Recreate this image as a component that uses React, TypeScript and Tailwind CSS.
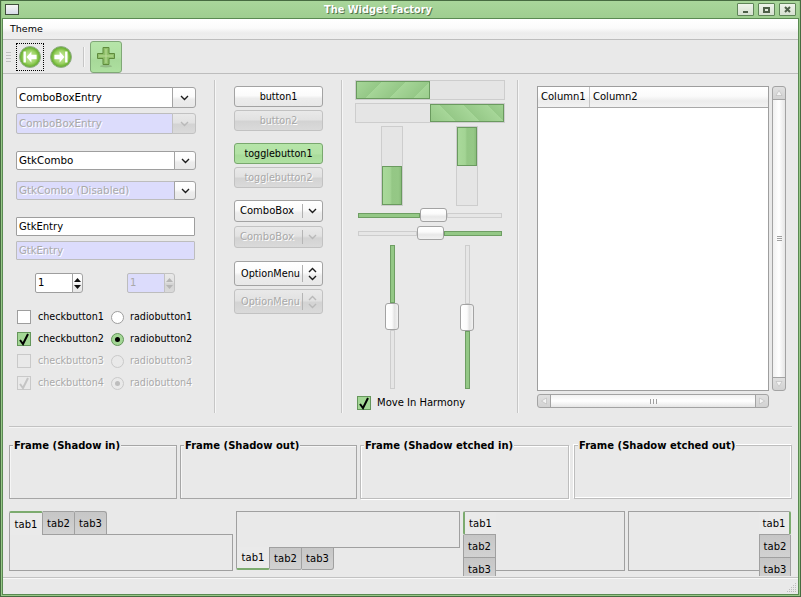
import type { ReactNode } from 'react';

const shiny = 'bg-[linear-gradient(#ffffff,#fbfbfb_45%,#ececec_60%,#e8e8e8)]';
const shinyOff = 'bg-[linear-gradient(#e9e9e9,#e2e2e2_45%,#d3d3d3_55%,#dadada)]';
const offText = 'text-[#a9a9a9] [text-shadow:1px_1px_0_#ffffff]';
const stripesV =
  'bg-[linear-gradient(90deg,#a9d99a,#a3d494_40%,#94c785_50%,#95c886_85%,#8abd7b)]';

function Chevron({ off = false, up = false }: { off?: boolean; up?: boolean }) {
  return (
    <svg width="9" height="6" viewBox="0 0 9 6" className={up ? 'rotate-180' : ''}>
      <path d="M1 1 L4.5 4.5 L8 1" fill="none" stroke={off ? '#b9b9b9' : '#1c1c1c'} strokeWidth="1.4" />
    </svg>
  );
}

function ComboEntry({ label, off = false, h, btn, activeBtn = false }: { label: string; off?: boolean; h: string; btn: string; activeBtn?: boolean }) {
  const lit = !off || activeBtn;
  return (
    <div className={`flex w-[180px] ${h}`}>
      <div className={`flex-1 flex items-center pl-[2px] text-[10.3px] rounded-l-[2px] border border-[#9e9e9e] ${off ? 'bg-[#dcdcfc] border-[#bdbdbd] ' + offText : 'bg-white text-black'}`}>
        {label}
      </div>
      <div className={`${btn} -ml-px flex items-center justify-center rounded-r-[3px] border ${lit ? 'border-[#a3a3a3] ' + shiny : 'border-[#c2c2c2] ' + shinyOff}`}>
        <Chevron off={!lit} />
      </div>
    </div>
  );
}

function Entry({ label, off = false }: { label: string; off?: boolean }) {
  return (
    <div className={`w-[179px] h-[19px] flex items-center pl-[2px] rounded-[1px] border ${off ? 'bg-[#dcdcfc] border-[#bdbdbd] ' + offText : 'bg-white border-[#9e9e9e] text-black'}`}>
      {label}
    </div>
  );
}

function Spin({ off = false }: { off?: boolean }) {
  const c = off ? '#b5b5b5' : '#111111';
  return (
    <div className="flex w-[48px] h-[20px]">
      <div className={`w-[38px] flex items-center pl-[2px] border rounded-l-[2px] ${off ? 'bg-[#dcdcfc] border-[#bdbdbd] text-[#a9a9a9]' : 'bg-white border-[#9e9e9e] text-black'}`}>1</div>
      <div className={`w-[11px] -ml-px flex flex-col items-center justify-center gap-[3px] border rounded-r-[3px] ${off ? 'border-[#c2c2c2] ' + shinyOff : 'border-[#a3a3a3] ' + shiny}`}>
        <svg width="7" height="4" viewBox="0 0 7 4"><path d="M3.5 0 L7 4 H0 Z" fill={c} /></svg>
        <svg width="7" height="4" viewBox="0 0 7 4"><path d="M0 0 H7 L3.5 4 Z" fill={c} /></svg>
      </div>
    </div>
  );
}

function Tick({ color }: { color: string }) {
  return (
    <svg width="12" height="13" viewBox="0 0 12 13">
      <path d="M2 7 L5 11 L10 1" fill="none" stroke={color} strokeWidth="2" />
    </svg>
  );
}

function Check({ on = false, off = false }: { on?: boolean; off?: boolean }) {
  let look = 'bg-white border-[#9e9e9e]';
  if (on) look = 'bg-[#a3d695] border-[#65965b]';
  if (off) look = 'bg-[#e9e9e9] border-[#c9c9c9]';
  return (
    <div className={`w-[14px] h-[14px] shrink-0 border flex items-center justify-center ${look}`}>
      {on && <Tick color={off ? '#c4c4c4' : '#000000'} />}
    </div>
  );
}

function Radio({ on = false, off = false }: { on?: boolean; off?: boolean }) {
  let look = 'bg-white border-[#9e9e9e]';
  if (on) look = 'bg-[#a3d695] border-[#65965b]';
  if (off) look = 'bg-[#e9e9e9] border-[#c9c9c9]';
  return (
    <div className={`w-[13px] h-[13px] shrink-0 rounded-full border flex items-center justify-center ${look}`}>
      {on && <div className={`w-[5px] h-[5px] rounded-full ${off ? 'bg-[#bdbdbd]' : 'bg-black'}`} />}
    </div>
  );
}

function CheckRow({ n, on = false, off = false }: { n: number; on?: boolean; off?: boolean }) {
  const text = off ? offText : 'text-black';
  return (
    <div className="flex items-center h-[22px] pl-px">
      <Check on={on} off={off} />
      <span className={`ml-[7px] w-[73px] text-[9.6px] ${text}`}>checkbutton{n}</span>
      <Radio on={on} off={off} />
      <span className={`ml-[6px] text-[9.6px] ${text}`}>radiobutton{n}</span>
    </div>
  );
}

function Btn({ label, off = false, green = false, mt = '' }: { label: string; off?: boolean; green?: boolean; mt?: string }) {
  let look = `border-[#a3a3a3] text-black ${shiny}`;
  if (off) look = `border-[#c2c2c2] ${offText} ${shinyOff}`;
  if (green) look = 'border-[#79a86e] text-black bg-[linear-gradient(#b6e5a9,#b3e2a5_50%,#a9dc9b_60%,#b0e1a2)]';
  return <div className={`w-[89px] h-[21px] flex items-center justify-center rounded-[3px] border text-[9.6px] ${look} ${mt}`}>{label}</div>;
}

function MenuBtn({ label, off = false, double = false, h, mt = '' }: { label: string; off?: boolean; double?: boolean; h: string; mt?: string }) {
  return (
    <div className={`w-[89px] flex items-center rounded-[3px] border ${h} ${mt} ${off ? `border-[#c2c2c2] ${offText} ${shinyOff}` : `border-[#a3a3a3] text-black ${shiny}`}`}>
      <span className={`flex-1 ${double ? 'pl-[6px] text-[9.7px]' : 'pl-[5px]'} whitespace-nowrap`}>{label}</span>
      <div className={`w-[20px] h-[calc(100%-6px)] shrink-0 flex flex-col items-center justify-center gap-[2px] border-l ${off ? 'border-[#b5b5b5]' : 'border-[#b0b0b0]'}`}>
        {double && <Chevron off={off} up />}
        <Chevron off={off} />
      </div>
    </div>
  );
}

function Separator() {
  return <div className="w-[2px] shrink-0 border-l border-[#c6c6c6] bg-[#f6f6f6]" />;
}

function HBar({ right = false, mt = '' }: { right?: boolean; mt?: string }) {
  return (
    <div className={`w-[150px] h-[20px] flex border border-[#cdcdcd] bg-[#e5e5e5] ${right ? 'justify-end' : ''} ${mt}`}>
      <div
        className={`w-[74px] border border-[#6a9a5f] ${
          right
            ? 'bg-[repeating-linear-gradient(45deg,#95c887_0px,#a6d698_17px)]'
            : 'bg-[repeating-linear-gradient(135deg,#a6d698_0px,#95c887_17px)]'
        }`}
      />
    </div>
  );
}

function VBar({ bottom = false }: { bottom?: boolean }) {
  return (
    <div className={`w-[22px] h-[80px] flex flex-col border border-[#cdcdcd] bg-[#e5e5e5] ${bottom ? 'justify-end' : ''}`}>
      <div className={`h-[39px] border border-[#6a9a5f] ${stripesV}`} />
    </div>
  );
}

function HThumb() {
  return <div className="w-[27px] h-[14px] shrink-0 rounded-[3px] border border-[#a3a3a3] bg-[linear-gradient(#ffffff,#fbfbfb_40%,#e8e8e8_65%,#f2f2f2)]" />;
}

function VThumb() {
  return <div className="w-[14px] h-[27px] shrink-0 rounded-[3px] border border-[#a3a3a3] bg-[linear-gradient(90deg,#ffffff,#fbfbfb_50%,#e4e4e4_70%,#f2f2f2)]" />;
}

const troughOn = 'bg-[#94c886] border border-[#6e9e63]';
const troughOff = 'bg-[#e6e6e6] border border-[#cdcdcd]';

function Frame({ label, width, look }: { label: string; width: string; look: string }) {
  return (
    <div className={`h-[54px] shrink-0 ${width} ${look}`}>
      <div className="-mt-[7px] ml-[3px] w-fit px-px bg-[#e9e9e9] font-bold text-black leading-[13px]">{label}</div>
    </div>
  );
}

function Tab({ label, active = false, className }: { label: string; active?: boolean; className: string }) {
  return (
    <div className={`flex items-center justify-center pt-px border-[#a0a0a0] text-black ${active ? 'bg-[#eaeaea]' : 'bg-[linear-gradient(#c6c6c6,#d2d2d2)]'} ${className}`}>
      {label}
    </div>
  );
}

function ToolRound({ id, mirror = false }: { id: string; mirror?: boolean }) {
  return (
    <svg width="22" height="22" viewBox="0 0 22 22" className={mirror ? '-scale-x-100' : ''}>
      <defs>
        <radialGradient id={id} cx="50%" cy="50%" r="50%">
          <stop offset="0" stopColor="#cbe9a4" />
          <stop offset="0.6" stopColor="#9fd468" />
          <stop offset="0.85" stopColor="#74b83a" />
          <stop offset="1" stopColor="#62a436" />
        </radialGradient>
      </defs>
      <circle cx="11" cy="11" r="10.5" fill={`url(#${id})`} stroke="#93b087" strokeWidth="1" />
      <rect x="4.5" y="5.5" width="2.4" height="11" fill="#ffffff" />
      <path d="M7.6 11 L12.4 5.6 V8.8 H17.6 V13.2 H12.4 V16.4 Z" fill="#ffffff" />
    </svg>
  );
}

function PlusIcon() {
  return (
    <svg width="20" height="22" viewBox="0 0 20 22">
      <ellipse cx="10" cy="20.2" rx="6" ry="1.2" fill="#93bb86" />
      <path d="M7 1.5 H13 V7.5 H18.5 V12.5 H13 V18.5 H7 V12.5 H1.5 V7.5 H7 Z" fill="#8fc06a" stroke="#5f8a3c" strokeWidth="1" />
      <path d="M10 3 V17 M3 10 H17" stroke="#bcdc98" strokeWidth="1" />
    </svg>
  );
}

function WinBtn({ children }: { children: ReactNode }) {
  return (
    <div className="w-[17px] h-[13px] flex items-center justify-center border border-[#5f8558] rounded-[1px] bg-[linear-gradient(#eef4ea,#d6e0d0)]">
      {children}
    </div>
  );
}

function ScrollArrow({ d, className = '' }: { d: string; className?: string }) {
  return (
    <div className={`w-[14px] h-[14px] shrink-0 flex items-center justify-center border border-[#a3a3a3] bg-[linear-gradient(#e0e0e0,#d2d2d2)] ${className}`}>
      <svg width="8" height="8" viewBox="0 0 8 8"><path d={d} fill="#f4f4f4" stroke="#b0b0b0" strokeWidth="0.5" /></svg>
    </div>
  );
}

export default function App() {
  return (
    <div className="w-[801px] h-[597px] overflow-hidden flex flex-col border border-[#476b41] bg-[#97c888] px-px pb-px font-['DejaVu_Sans',sans-serif] text-[10px] leading-none">
      {/* title bar */}
      <div className="h-[17px] shrink-0 flex items-center bg-[linear-gradient(#a9d69b,#9fce90)] pl-[3px] pr-[3px]">
        <div className="w-[14px] h-[11px] border border-[#3f4f3c] bg-[linear-gradient(#f6f6f6,#d8dce8)]" />
        <div className="flex-1 text-center font-bold text-[9.8px] text-white [text-shadow:1px_1px_0_#54764d]">The Widget Factory</div>
        <div className="flex gap-[4px]">
          <WinBtn><div className="w-[5px] h-[2px] mt-[4px] bg-[#4d5f48]" /></WinBtn>
          <WinBtn><div className="w-[7px] h-[6px] border-2 border-[#4d5f48]" /></WinBtn>
          <WinBtn>
            <svg width="7" height="7" viewBox="0 0 7 7"><path d="M1 1 L6 6 M6 1 L1 6" stroke="#4d5f48" strokeWidth="2" /></svg>
          </WinBtn>
        </div>
      </div>

      <div className="flex-1 min-h-0 flex flex-col border border-[#5a8a52] bg-[#e9e9e9]">
        {/* menu bar */}
        <div className="h-[21px] shrink-0 flex items-center pl-[7px] pb-px text-[9.5px] text-black border-b border-[#bdbdbd] bg-[linear-gradient(#ffffff,#fbfbfb_45%,#ececec_70%,#eeeeee)]">
          Theme
        </div>

        {/* toolbar */}
        <div className="h-[34px] shrink-0 flex items-center border-b border-[#bdbdbd]">
          <div className="ml-[3px] w-[5px] flex flex-col gap-[2px]">
            <div className="h-px bg-[#c0c0c0]" />
            <div className="h-px bg-[#c0c0c0]" />
            <div className="h-px bg-[#c0c0c0]" />
            <div className="h-px bg-[#c0c0c0]" />
          </div>
          <div className="ml-[5px] w-[28px] h-[28px] flex items-center justify-center border border-dotted border-black">
            <ToolRound id="ballFirst" />
          </div>
          <div className="ml-[6px]"><ToolRound id="ballLast" mirror /></div>
          <div className="ml-[11px] w-px h-[20px] bg-[#c6c6c6] shadow-[1px_0_0_#f6f6f6]" />
          <div className="ml-[6px] w-[32px] h-[32px] flex items-center justify-center rounded-[3px] border border-[#80a877] bg-[linear-gradient(#b6e5a9,#b0e0a2_50%,#a7d999_62%,#aee0a0)]">
            <PlusIcon />
          </div>
        </div>

        {/* widgets */}
        <div className="mt-[6px] h-[333px] shrink-0 flex">
          <div className="w-[211px] shrink-0 pl-[13px] pt-[7px]">
            <ComboEntry label="ComboBoxEntry" h="h-[21px]" btn="w-[24px]" />
            <div className="mt-[5px]"><ComboEntry label="ComboBoxEntry" off h="h-[21px]" btn="w-[24px]" /></div>
            <div className="mt-[17px]"><ComboEntry label="GtkCombo" h="h-[19px]" btn="w-[22px]" /></div>
            <div className="mt-[11px]"><ComboEntry label="GtkCombo (Disabled)" off activeBtn h="h-[19px]" btn="w-[22px]" /></div>
            <div className="mt-[17px]"><Entry label="GtkEntry" /></div>
            <div className="mt-[5px]"><Entry label="GtkEntry" off /></div>
            <div className="mt-[13px] ml-[19px] flex gap-[44px]">
              <Spin />
              <Spin off />
            </div>
            <div className="mt-[13px]">
              <CheckRow n={1} />
              <CheckRow n={2} on />
              <CheckRow n={3} off />
              <CheckRow n={4} on off />
            </div>
          </div>

          <Separator />

          <div className="w-[125px] shrink-0 pl-[18px] pt-[6px]">
            <Btn label="button1" />
            <Btn label="button2" off mt="mt-[3px]" />
            <Btn label="togglebutton1" green mt="mt-[12px]" />
            <Btn label="togglebutton2" off mt="mt-[3px]" />
            <MenuBtn label="ComboBox" h="h-[22px]" mt="mt-[12px]" />
            <MenuBtn label="ComboBox" off h="h-[22px]" mt="mt-[4px]" />
            <MenuBtn label="OptionMenu" double h="h-[25px]" mt="mt-[13px]" />
            <MenuBtn label="OptionMenu" off double h="h-[25px]" mt="mt-[3px]" />
          </div>

          <Separator />

          <div className="w-[174px] shrink-0 pl-[12px]">
            <HBar />
            <HBar right mt="mt-[3px]" />
            <div className="mt-[3px] ml-[26px] flex gap-[53px]">
              <VBar bottom />
              <VBar />
            </div>
            <div className="mt-[2px] ml-[3px] w-[144px] flex items-center">
              <div className={`w-[62px] h-[5px] ${troughOn}`} />
              <HThumb />
              <div className={`flex-1 h-[5px] ${troughOff}`} />
            </div>
            <div className="mt-[4px] ml-[3px] w-[144px] flex items-center">
              <div className={`w-[59px] h-[5px] ${troughOff}`} />
              <HThumb />
              <div className={`flex-1 h-[5px] ${troughOn}`} />
            </div>
            <div className="mt-[5px] ml-[30px] flex gap-[61px]">
              <div className="h-[144px] flex flex-col items-center">
                <div className={`w-[5px] h-[58px] ${troughOn}`} />
                <VThumb />
                <div className={`w-[5px] flex-1 ${troughOff}`} />
              </div>
              <div className="h-[144px] flex flex-col items-center">
                <div className={`w-[5px] h-[59px] ${troughOff}`} />
                <VThumb />
                <div className={`w-[5px] flex-1 ${troughOn}`} />
              </div>
            </div>
            <div className="mt-[7px] ml-[2px] flex items-center">
              <Check on />
              <span className="ml-[6px] text-black">Move In Harmony</span>
            </div>
          </div>

          <Separator />

          <div className="flex-1 pl-[18px] pt-[6px]">
            <div className="flex">
              <div className="w-[232px] h-[305px] border border-[#9e9e9e] bg-white flex flex-col">
                <div className="h-[21px] shrink-0 flex items-center border-b border-[#a8a8a8] text-black bg-[linear-gradient(#ffffff,#fbfbfb_45%,#ececec_70%,#f2f2f2)]">
                  <div className="w-[52px] h-full flex items-center pl-[3px] border-r border-[#c4c4c4]">Column1</div>
                  <div className="pl-[3px]">Column2</div>
                </div>
              </div>
              <div className="ml-[3px] w-[14px] h-[305px] flex flex-col">
                <ScrollArrow d="M4 1.5 L7 6.5 H1 Z" className="rounded-t-[3px]" />
                <div className="flex-1 -my-px flex flex-col items-center justify-center gap-px border border-[#a3a3a3] bg-[linear-gradient(90deg,#f0f0f0,#ffffff_50%,#e6e6e6)]">
                  <div className="w-[5px] h-px bg-[#a0a0a0]" />
                  <div className="w-[5px] h-px bg-[#a0a0a0]" />
                  <div className="w-[5px] h-px bg-[#a0a0a0]" />
                </div>
                <ScrollArrow d="M1 1.5 H7 L4 6.5 Z" className="rounded-b-[3px]" />
              </div>
            </div>
            <div className="mt-[3px] w-[232px] h-[14px] flex">
              <ScrollArrow d="M1.5 4 L6.5 1 V7 Z" className="rounded-l-[3px]" />
              <div className="flex-1 -mx-px flex items-center justify-center gap-[2px] border border-[#a3a3a3] bg-[linear-gradient(#f2f2f2,#ffffff_50%,#e6e6e6)]">
                <div className="w-px h-[5px] bg-[#a0a0a0]" />
                <div className="w-px h-[5px] bg-[#a0a0a0]" />
                <div className="w-px h-[5px] bg-[#a0a0a0]" />
              </div>
              <ScrollArrow d="M1.5 1 L6.5 4 L1.5 7 Z" className="rounded-r-[3px]" />
            </div>
          </div>
        </div>

        <div className="mt-[13px] ml-[6px] w-[783px] h-[2px] shrink-0 border-t border-[#c2c2c2] bg-[#f4f4f4]" />

        {/* frames */}
        <div className="mt-[17px] ml-[6px] h-[54px] shrink-0 flex">
          <Frame label="Frame (Shadow in)" width="w-[168px]" look="border border-[#a6a6a6] shadow-[inset_1px_1px_0_#f6f6f6]" />
          <div className="w-[3px]" />
          <Frame label="Frame (Shadow out)" width="w-[177px]" look="border border-[#a6a6a6] shadow-[inset_1px_1px_0_#f6f6f6]" />
          <div className="w-[3px]" />
          <Frame label="Frame (Shadow etched in)" width="w-[209px]" look="border border-[#bdbdbd] shadow-[inset_1px_1px_0_#ffffff,1px_1px_0_#ffffff]" />
          <div className="w-[5px]" />
          <Frame label="Frame (Shadow etched out)" width="w-[218px]" look="border border-[#bdbdbd] shadow-[-1px_-1px_0_#ffffff,inset_-1px_-1px_0_#ffffff]" />
        </div>

        {/* notebooks */}
        <div className="mt-[12px] ml-[6px] h-[65px] shrink-0 flex gap-[3px] overflow-hidden">
          <div className="w-[224px] shrink-0">
            <div className="relative flex items-start">
              <Tab label="tab1" active className="w-[34px] h-[24px] border-x border-t-2 border-t-[#7cab6f] rounded-t-[2px]" />
              <Tab label="tab2" className="w-[32px] h-[23px] border-r border-t rounded-tr-[2px]" />
              <Tab label="tab3" className="w-[32px] h-[23px] border-r border-t rounded-tr-[3px]" />
            </div>
            <div className="-mt-px h-[37px] border border-[#a0a0a0]" />
          </div>

          <div className="w-[224px] shrink-0">
            <div className="h-[37px] border border-[#a0a0a0]" />
            <div className="relative -mt-px flex items-start">
              <Tab label="tab1" active className="w-[34px] h-[23px] border-x border-b-2 border-b-[#7cab6f] rounded-b-[2px]" />
              <Tab label="tab2" className="w-[32px] h-[23px] border-r border-y rounded-br-[2px]" />
              <Tab label="tab3" className="w-[32px] h-[23px] border-r border-y rounded-br-[3px]" />
            </div>
          </div>

          <div className="w-[162px] shrink-0 flex items-start">
            <div className="relative w-[33px] shrink-0 flex flex-col">
              <Tab label="tab1" active className="h-[24px] border-y border-l-2 border-l-[#7cab6f] rounded-l-[2px]" />
              <Tab label="tab2" className="h-[23px] border-x border-b" />
              <Tab label="tab3" className="h-[23px] border-x border-b" />
            </div>
            <div className="flex-1 -ml-px h-[60px] border border-[#a0a0a0]" />
          </div>

          <div className="w-[163px] shrink-0 flex items-start">
            <div className="flex-1 -mr-px h-[60px] border border-[#a0a0a0]" />
            <div className="relative w-[32px] shrink-0 flex flex-col">
              <Tab label="tab1" active className="h-[24px] border-y border-r-2 border-r-[#7cab6f] rounded-r-[2px]" />
              <Tab label="tab2" className="h-[23px] border-x border-b" />
              <Tab label="tab3" className="h-[23px] border-x border-b" />
            </div>
          </div>
        </div>

        {/* status bar */}
        <div className="mt-px flex-1 flex justify-end items-end border-t border-[#c2c2c2] shadow-[inset_0_1px_0_#f8f8f8]">
          <svg width="12" height="12" viewBox="0 0 12 12">
            <g fill="#bdbdbd">
              <rect x="9" y="1" width="1" height="1" />
              <rect x="7" y="3" width="1" height="1" />
              <rect x="9" y="3" width="1" height="1" />
              <rect x="5" y="5" width="1" height="1" />
              <rect x="7" y="5" width="1" height="1" />
              <rect x="9" y="5" width="1" height="1" />
              <rect x="3" y="7" width="1" height="1" />
              <rect x="5" y="7" width="1" height="1" />
              <rect x="7" y="7" width="1" height="1" />
              <rect x="9" y="7" width="1" height="1" />
              <rect x="1" y="9" width="1" height="1" />
              <rect x="3" y="9" width="1" height="1" />
              <rect x="5" y="9" width="1" height="1" />
              <rect x="7" y="9" width="1" height="1" />
              <rect x="9" y="9" width="1" height="1" />
            </g>
          </svg>
        </div>
      </div>
    </div>
  );
}
